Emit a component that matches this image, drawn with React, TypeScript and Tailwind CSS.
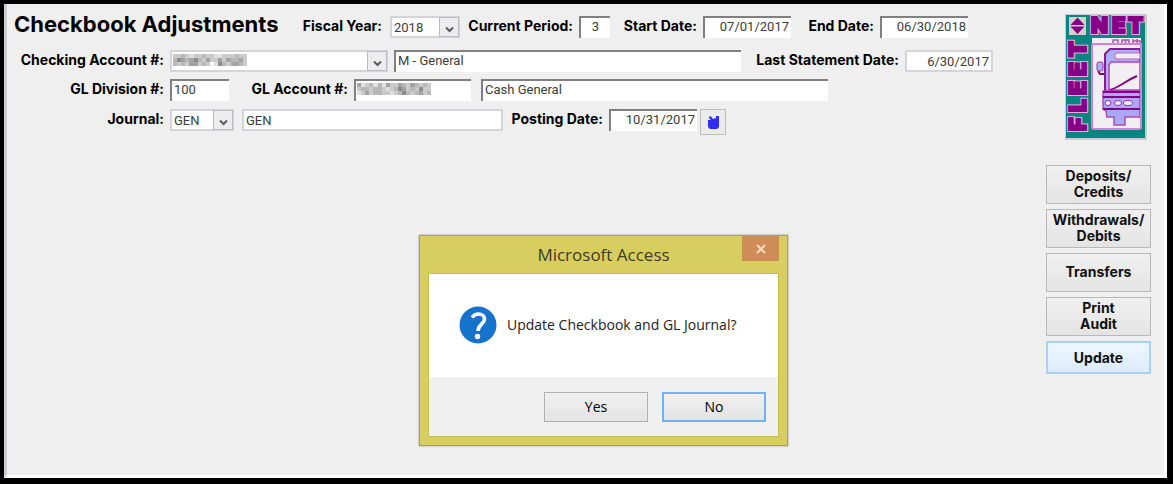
import { useState } from 'react';

const inputBase = 'block h-[22px] min-w-0 rounded-none bg-white px-[2px] text-[13px] text-[#3c3c3c] outline-none';
const sunken = 'border-t-2 border-l-2 border-t-[#808080] border-l-[#808080] pb-[3px]';
const flat = 'border-2 border-[#d4d4da]';

const Label = ({ htmlFor, width, children }: any) => (
  <label
    htmlFor={htmlFor}
    className={`${width} shrink-0 text-right font-['Inter',sans-serif] text-[14px] leading-5 font-bold whitespace-nowrap`}
  >
    {children}
  </label>
);

const Field = ({ id, value, className, label }: any) => (
  <input id={id} aria-label={label} defaultValue={value} className={`${inputBase} ${className}`} />
);

const Select = ({ id, value, width, children }: any) => (
  <div className={`relative shrink-0 ${width}`}>
    <select id={id} defaultValue={value} className={`${inputBase} ${flat} w-full appearance-none`}>
      <option>{value}</option>
    </select>
    <span className="pointer-events-none absolute top-px right-px flex h-5 w-5 items-end justify-center border border-[#bcbcbc] bg-[#ededed] pb-[3px]">
      <svg width="9" height="7" viewBox="0 0 9 7" fill="none" stroke="#5a5a5a" strokeWidth="2">
        <path d="M1 1.5 4.5 5 8 1.5" />
      </svg>
    </span>
    {children}
  </div>
);

// account numbers are hidden under a mosaic, one string per row of cells
const shades = ['#8c8c8c', '#a3a3a3', '#b8b8b8', '#cbcbcb', '#e0e0e0', '#f8f8f8'];
const checkingMosaic = ['332343323344333233', '201210231331312213', '232311323540231123'];
const glMosaic = ['143242413312312323', '322322343201323033', '431322334320232132'];

const Mosaic = ({ rows }: { rows: string[] }) => (
  <svg
    width="74"
    height="12"
    viewBox="0 0 18 3"
    preserveAspectRatio="none"
    shapeRendering="crispEdges"
    className="pointer-events-none absolute top-1 left-[3px]"
    aria-hidden="true"
  >
    {rows.map((row, y) =>
      row.split('').map((c, x) => <rect key={`${x}-${y}`} x={x} y={y} width="1" height="1" fill={shades[Number(c)]} />)
    )}
  </svg>
);

const Logo = () => (
  <svg width="82" height="126" viewBox="0 0 82 126" role="img" aria-label="Fleet Net" className="overflow-visible">
    <rect width="82" height="126" fill="#c4cfcd" />
    <rect x="1" y="1" width="79" height="123" fill="#078580" />
    <rect x="4" y="3" width="17" height="18" fill="#d0d0cc" />
    <path d="M12.5 3.5 19.5 11H5.5ZM5.5 12.5H19.5L12.5 20Z" fill="#850085" />
    <rect x="27" y="24" width="49" height="6" fill="#f3f0f3" />
    <path
      d="M48 30V26H53V30M57 30V26H64V30M60.5 26V30M68 30V25M72 30V25M68 27H75V30"
      fill="none"
      stroke="#b050b4"
      strokeWidth="1.5"
    />
    <rect x="27" y="30" width="49" height="85" rx="2" fill="#f1eff1" stroke="#d77fd2" strokeWidth="2" />
    {/* roof, pillar and windscreen */}
    <path d="M75 35H45L40 40V77H75Z" fill="#b2aef5" stroke="#8d1a95" strokeWidth="2" />
    <path d="M75 39H51Q48 42 51 45H75Z" fill="#f1eff1" stroke="#c060c0" />
    <path d="M75 48H46L44 51V76H75Z" fill="#f1eff1" stroke="#b04ab4" strokeWidth="1.5" />
    <path d="M45 76C55 73 60 67 72 62" fill="none" stroke="#850085" strokeWidth="2" />
    {/* mirror */}
    <path d="M39 60H35L33 57" fill="none" stroke="#850085" strokeWidth="2" />
    <rect x="32" y="48" width="6" height="9" rx="2" fill="#b2aef5" stroke="#9a30a5" />
    {/* front */}
    <path d="M38 77H75V103H60V111H49V103H42L41 97L38 95Z" fill="#a9a8f4" stroke="#b04ab4" strokeWidth="1.5" />
    <path d="M38 78H75M38 83H75M38 95H75" stroke="#850085" strokeWidth="2" />
    <g fill="#f1eff1" stroke="#9a30a5">
      <ellipse cx="43" cy="89" rx="3" ry="2.5" />
      <ellipse cx="53" cy="89" rx="3.5" ry="2.5" />
      <ellipse cx="63" cy="89" rx="4.5" ry="2.5" />
    </g>
    <path d="M76 29V115" stroke="#d77fd2" strokeWidth="2" />
    <g fontFamily="Inter, sans-serif" fontWeight="900" paintOrder="stroke">
      <g fill="#ecaae8" stroke="#ecaae8" strokeWidth="4" aria-hidden="true">
        <text x="26 47 63" y="19" fontSize="22">NET</text>
        <text transform="translate(21 118) rotate(-90)" x="1 20 37 56 75" fontSize="23">FLEET</text>
      </g>
      <g fill="#850085" stroke="#850085" strokeWidth="2">
        <text x="26 47 63" y="19" fontSize="22">NET</text>
        <text transform="translate(21 118) rotate(-90)" x="1 20 37 56 75" fontSize="23">FLEET</text>
      </g>
    </g>
  </svg>
);

const actions = [['Deposits/', 'Credits'], ['Withdrawals/', 'Debits'], ['Transfers'], ['Print', 'Audit']];

const actionClass = "w-full border font-['Inter',sans-serif] text-[14px] leading-4 font-bold text-[#111]";

const App = () => {
  const [open, setOpen] = useState(true);

  return (
    <div className="relative flex min-h-screen border-4 border-r-[6px] border-b-[6px] border-black bg-[#efefef] font-['Roboto',sans-serif] text-black">
      <div className="flex flex-1 justify-between border-r-3 border-b-3 border-l-3 border-r-white border-b-white border-l-[#cdcdd2]">
        <form className="pl-[7px]" onSubmit={(e) => e.preventDefault()}>
          <div className="mt-3 flex items-start gap-[6px]">
            <h1 className="-my-1 w-[274px] shrink-0 font-['Inter',sans-serif] text-[22px] leading-6 font-bold whitespace-nowrap">
              Checkbook Adjustments
            </h1>
            <Label htmlFor="year" width="w-[88px]">Fiscal Year:</Label>
            <div className="pl-[2px]">
              <Select id="year" value="2018" width="w-[70px]" />
            </div>
            <Label htmlFor="period" width="w-[107px]">Current Period:</Label>
            <Field id="period" value="3" className={`${sunken} w-[31px] text-center`} />
            <Label htmlFor="start" width="w-[81px]">Start Date:</Label>
            <Field id="start" value="07/01/2017" className={`${sunken} w-[88px] text-right`} />
            <Label htmlFor="end" width="w-[77px]">End Date:</Label>
            <Field id="end" value="06/30/2018" className={`${sunken} w-[88px] text-right`} />
          </div>

          <div className="mt-3 flex items-start gap-[6px]">
            <Label htmlFor="checking" width="w-[150px]">Checking Account #:</Label>
            <Select id="checking" value="" width="w-[218px]">
              <Mosaic rows={checkingMosaic} />
            </Select>
            <Field label="Account name" value="M - General" className={`${sunken} w-[347px]`} />
            <Label htmlFor="statement" width="w-[152px]">Last Statement Date:</Label>
            <Field id="statement" value="6/30/2017" className={`${flat} w-[88px] text-right`} />
          </div>

          <div className="mt-[7px] flex items-start gap-[6px]">
            <Label htmlFor="division" width="w-[150px]">GL Division #:</Label>
            <Field id="division" value="100" className={`${sunken} w-[59px]`} />
            <Label htmlFor="gl" width="w-[113px]">GL Account #:</Label>
            <div className="relative mr-1 w-[117px]">
              <Field id="gl" value="" className={`${sunken} w-full`} />
              <Mosaic rows={glMosaic} />
            </div>
            <Field label="GL account name" value="Cash General" className={`${sunken} w-[347px]`} />
          </div>

          <div className="mt-2 flex items-start gap-[6px]">
            <Label htmlFor="journal" width="w-[150px]">Journal:</Label>
            <Select id="journal" value="GEN" width="w-[64px]" />
            <Field label="Journal name" value="GEN" className={`${flat} ml-[2px] w-[261px]`} />
            <Label htmlFor="posting" width="w-[94px]">Posting Date:</Label>
            <Field id="posting" value="10/31/2017" className={`${sunken} w-[88px] text-right`} />
            <button
              aria-label="Pick posting date"
              className="-ml-[3px] flex h-[26px] w-[26px] items-center justify-center border border-[#bdbdbd] bg-[#ebebeb]"
            >
              <svg width="13" height="15" viewBox="0 0 13 15" fill="#2e2eee">
                <path d="M1 5H4L2 3V1.5H4L6 4L9 3L9 1H12V12L10 14H3L1 12Z" />
              </svg>
            </button>
          </div>
        </form>

        <aside className="mr-[13px] flex w-[105px] shrink-0 flex-col pt-[10px]">
          <div className="mb-[25px] flex justify-end pr-1">
            <Logo />
          </div>
          <div className="flex flex-col gap-[5px]">
            {actions.map((lines) => (
              <button
                key={lines[0]}
                className={`${actionClass} flex h-[39px] flex-col items-center justify-center border-[#b9b9b9] bg-linear-to-b from-[#f0f0f0] to-[#e4e4e4] pb-[2px]`}
              >
                {lines.map((line) => (
                  <span key={line}>{line}</span>
                ))}
              </button>
            ))}
            <button
              onClick={() => setOpen(true)}
              className={`${actionClass} h-[33px] border-2 border-[#a9d0f5] bg-linear-to-b from-[#eef6fe] to-[#dcecfb]`}
            >
              Update
            </button>
          </div>
        </aside>
      </div>

      {open && (
        <div
          role="dialog"
          aria-labelledby="dialog-title"
          className="absolute top-[231px] left-[415px] w-[369px] border border-[#aaa34d] bg-[#d8ce60] px-2 pb-2 font-['Open_Sans',sans-serif] shadow-[0_0_2px_#999]"
        >
          <div className="relative flex h-[37px] items-center justify-center">
            <h2 id="dialog-title" className="text-[17px] text-[#3f3c20]">Microsoft Access</h2>
            <button
              aria-label="Close"
              onClick={() => setOpen(false)}
              className="absolute top-0 right-0 flex h-[25px] w-[37px] items-center justify-center bg-[#cf8c58]"
            >
              <svg width="10" height="10" viewBox="0 0 10 10" stroke="#f0dcc0" strokeWidth="2">
                <path d="M1 1 9 9M9 1 1 9" />
              </svg>
            </button>
          </div>
          <div className="border border-[#c6bc55] bg-[#f0f0f0]">
            <div className="flex h-[103px] items-center gap-[10px] bg-white pb-[2px] pl-[30px]">
              <svg width="38" height="38" viewBox="0 0 38 38" fill="none">
                <circle cx="19" cy="19" r="18.5" fill="#1673cb" />
                <path
                  d="M13 11.5C15 8.800 17 8 19.5 8C23 8 25.5 9.800 25.5 13C25.5 18 19 18.5 19 25"
                  stroke="#fff"
                  strokeWidth="3.6"
                />
                <circle cx="18.5" cy="30.5" r="2.7" fill="#fff" />
              </svg>
              <p className="text-[14px] whitespace-nowrap text-[#222]">Update Checkbook and GL Journal?</p>
            </div>
            <div className="flex h-[59px] items-center justify-end gap-[14px] pr-3">
              <button
                onClick={() => setOpen(false)}
                className="h-[30px] w-[104px] border border-[#b0b0b0] bg-linear-to-b from-[#f0f0f0] to-[#e4e4e4] text-[14px]"
              >
                Yes
              </button>
              <button
                onClick={() => setOpen(false)}
                className="h-[30px] w-[104px] border-2 border-[#6fb2f5] bg-linear-to-b from-[#f0f0f0] to-[#e4e4e4] text-[14px]"
              >
                No
              </button>
            </div>
          </div>
        </div>
      )}
    </div>
  );
};

export default App;
